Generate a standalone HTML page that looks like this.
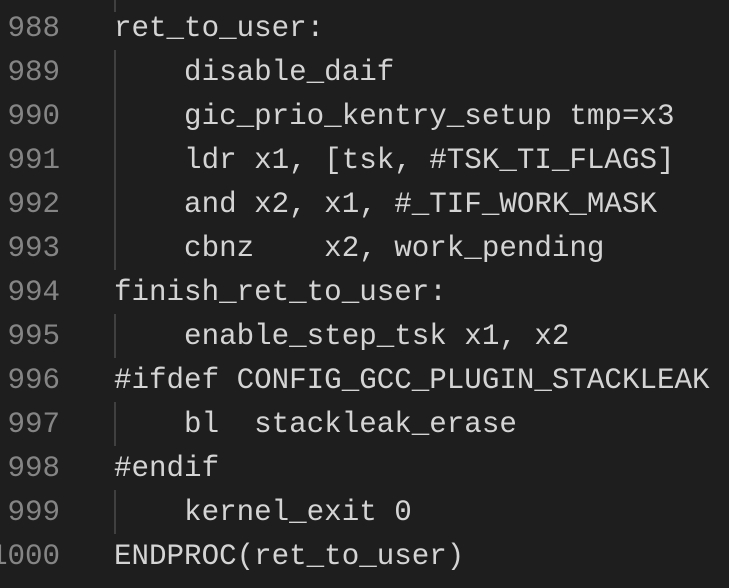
<html><head><style>
body{margin:0;width:729px;height:588px;background:#1e1e1e;overflow:hidden;position:relative;font-family:"Liberation Mono",monospace;font-size:29.2px;}
.l{position:absolute;left:0;height:44px;line-height:44px;white-space:pre;width:729px}
.n{position:absolute;right:669px;color:#858585;text-align:right}
.c{position:absolute;left:114px;color:#d4d4d4}
.g{position:absolute;left:114px;width:2px;background:#404040}
</style></head><body>
<div class="g" style="top:0;height:12px"></div>
<div class="g" style="top:50px;height:220px"></div>
<div class="g" style="top:314px;height:44px"></div>
<div class="g" style="top:402px;height:44px"></div>
<div class="g" style="top:490px;height:44px"></div>
<div class="l" style="top:7px"><span class="n">988</span><span class="c">ret_to_user:</span></div>
<div class="l" style="top:51px"><span class="n">989</span><span class="c">    disable_daif</span></div>
<div class="l" style="top:95px"><span class="n">990</span><span class="c">    gic_prio_kentry_setup tmp=x3</span></div>
<div class="l" style="top:139px"><span class="n">991</span><span class="c">    ldr x1, [tsk, #TSK_TI_FLAGS]</span></div>
<div class="l" style="top:183px"><span class="n">992</span><span class="c">    and x2, x1, #_TIF_WORK_MASK</span></div>
<div class="l" style="top:227px"><span class="n">993</span><span class="c">    cbnz    x2, work_pending</span></div>
<div class="l" style="top:271px"><span class="n">994</span><span class="c">finish_ret_to_user:</span></div>
<div class="l" style="top:315px"><span class="n">995</span><span class="c">    enable_step_tsk x1, x2</span></div>
<div class="l" style="top:359px"><span class="n">996</span><span class="c">#ifdef CONFIG_GCC_PLUGIN_STACKLEAK</span></div>
<div class="l" style="top:403px"><span class="n">997</span><span class="c">    bl  stackleak_erase</span></div>
<div class="l" style="top:447px"><span class="n">998</span><span class="c">#endif</span></div>
<div class="l" style="top:491px"><span class="n">999</span><span class="c">    kernel_exit 0</span></div>
<div class="l" style="top:535px"><span class="n">1000</span><span class="c">ENDPROC(ret_to_user)</span></div>
</body></html>
